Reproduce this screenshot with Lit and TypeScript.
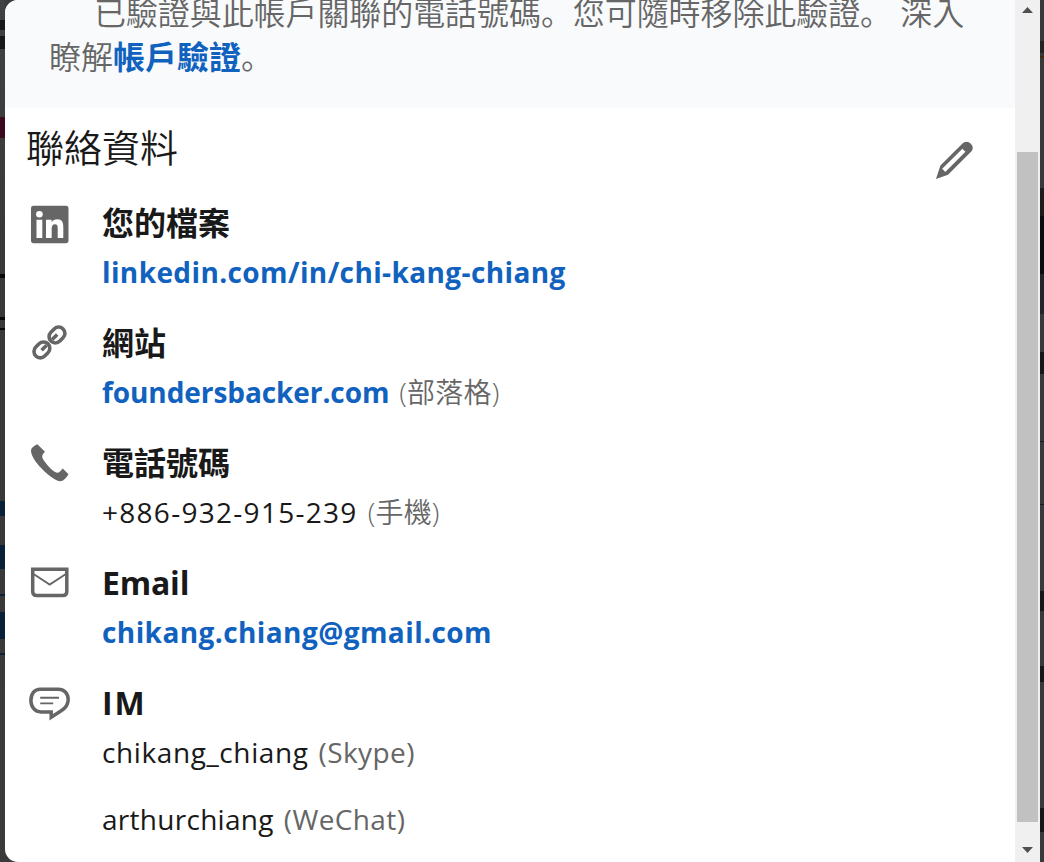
import { LitElement, html, svg, css } from 'lit';
import { customElement, property } from 'lit/decorators.js';
import { classMap } from 'lit/directives/class-map.js';

interface ContactValue {
  text: string;
  link?: boolean;
  note?: string;
  latinNote?: boolean;
  spacing: number;
  noteSpacing?: number;
}

interface ContactEntry {
  icon: string;
  title: string;
  titleSpacing?: number;
  values: ContactValue[];
}

const entries: ContactEntry[] = [
  {
    icon: 'linkedin',
    title: '您的檔案',
    values: [{ text: 'linkedin.com/in/chi-kang-chiang', link: true, spacing: 0.39 }],
  },
  {
    icon: 'link',
    title: '網站',
    values: [{ text: 'foundersbacker.com', link: true, note: '(部落格)', spacing: -0.08, noteSpacing: 0.2 }],
  },
  {
    icon: 'phone',
    title: '電話號碼',
    values: [{ text: '+886-932-915-239', note: '(手機)', spacing: 1.28, noteSpacing: 0.2 }],
  },
  {
    icon: 'email',
    title: 'Email',
    titleSpacing: -0.2,
    values: [{ text: 'chikang.chiang@gmail.com', link: true, spacing: 0.42 }],
  },
  {
    icon: 'im',
    title: 'IM',
    titleSpacing: 2,
    values: [
      { text: 'chikang_chiang', note: '(Skype)', latinNote: true, spacing: 0.6, noteSpacing: 0.4 },
      { text: 'arthurchiang', note: '(WeChat)', latinNote: true, spacing: 0.28, noteSpacing: 0.4 },
    ],
  },
];

const icons: Record<string, unknown> = {
  linkedin: svg`
    <rect x="5" y="5.8" width="37.5" height="37.4" rx="2.6" fill="currentColor"/>
    <circle cx="13.4" cy="14.2" r="3.3" fill="#fff"/>
    <path d="M10.5 19.8H16.3V38H10.5ZM20 19.8H25.6V22.3C26.7 20.5 28.8 19.3 31.4 19.3C36 19.3 37.3 22.3 37.3 27V38H31.7V28.2C31.7 25.8 31.2 24.2 29 24.2C26.7 24.2 25.7 25.9 25.7 28.2V38H20Z" fill="#fff"/>`,
  link: svg`
    <g fill="none" stroke="currentColor" stroke-width="3.6">
      <rect x="-8.6" y="-6.3" width="17.2" height="12.6" rx="6.3" transform="translate(15.9 29.9) rotate(-45)"/>
      <rect x="-8.6" y="-6.3" width="17.2" height="12.6" rx="6.3" transform="translate(31 15) rotate(-45)"/>
      <path d="M15.6 30.2L20.6 25.2M26.2 19.6L31.2 14.6"/>
    </g>`,
  phone: svg`
    <path d="M11.4 4.2L19 11.7C17.6 13.1 16.2 14.6 16.2 16.4C16.2 18 17.6 19.9 19.2 22.2C22 26.3 26.7 30.6 29.2 32.1C30.7 33 32.6 32.9 34 31.5L36.8 28.6L42.5 34.2C40.5 37.6 37.3 41.2 34.1 41.2C30.9 41.2 24 36.7 18 31C11.9 25.2 5 17 5 10.6C5 7.9 8.2 5.5 11.4 4.2Z" fill="currentColor"/>`,
  email: svg`
    <path d="M6.7 9.2H40.8V31.6Q40.8 35.6 36.8 35.6H10.7Q6.7 35.6 6.7 31.6Z" fill="none" stroke="currentColor" stroke-width="3.5"/>
    <path d="M6 13.1L23.7 24.6L41.4 13.1" fill="none" stroke="currentColor" stroke-width="1.8"/>`,
  im: svg`
    <path d="M14 9.2H32.4C37.7 9.2 42.2 13.1 42.2 19.5C42.2 25.9 38.8 28.5 35.2 30.8L25.2 37.3V31.9H15C9 31.9 4.9 27 4.9 20.6C4.9 13.5 9 9.2 14 9.2Z" fill="none" stroke="currentColor" stroke-width="3.5"/>
    <path d="M14.2 17.8H33M14.2 23.4H27.2" fill="none" stroke="currentColor" stroke-width="1.9"/>`,
};

// Slivers of the dimmed page that show beside the dialog.
const leftMarks = [
  { top: 20, height: 10, color: '#17181a' },
  { top: 36, height: 13, color: '#17181a' },
  { top: 117, height: 21, color: '#3b0a1e' },
  { top: 274, height: 4, color: '#080808' },
  { top: 317, height: 3, color: '#080808' },
  { top: 328, height: 2, color: '#080808' },
  { top: 501, height: 15, color: '#0a2038' },
  { top: 545, height: 24, color: '#0a2038' },
  { top: 594, height: 2, color: '#0a2038' },
  { top: 612, height: 27, color: '#0a2038' },
  { top: 653, height: 2, color: '#0a2038' },
];

const rightMarks = [
  { top: 41, height: 12, color: '#252421' },
  { top: 56, height: 2, color: '#3d2c10' },
  { top: 188, height: 28, color: '#1e1c1d' },
  { top: 216, height: 58, color: '#090c10' },
  { top: 274, height: 40, color: '#22252b' },
  { top: 352, height: 22, color: '#151819' },
  { top: 441, height: 1, color: '#151b2c' },
  { top: 504, height: 1, color: '#151b2c' },
  { top: 591, height: 20, color: '#151819' },
  { top: 666, height: 16, color: '#151819' },
  { top: 808, height: 24, color: '#151819' },
];

@customElement('contact-entry')
class ContactRow extends LitElement {
  @property({ attribute: false }) entry!: ContactEntry;

  static styles = css`
    :host {
      display: flex;
      padding: 0 0 24px 21px;
    }
    .icon {
      flex: none;
      width: 48px;
      height: 48px;
      margin-right: 28px;
      color: #666;
    }
    .title {
      margin: 0;
      height: 48px;
      font-size: 32px;
      font-weight: 700;
      line-height: 46px;
      color: #191919;
    }
    .value {
      height: 48px;
      margin: 0 0 19px;
      font-size: 28px;
      line-height: 48px;
      white-space: nowrap;
      color: #191919;
    }
    .value:last-child {
      margin-bottom: 0;
    }
    .link {
      font-weight: 700;
      color: #1062be;
    }
    .note {
      margin-left: 10px;
      font-weight: 350;
      color: #666;
    }
    .note.latin {
      font-weight: 400;
    }
  `;

  render() {
    return html`
      <svg class="icon" viewBox="0 0 48 48">${icons[this.entry.icon]}</svg>
      <div>
        <h3 class="title" style="letter-spacing: ${this.entry.titleSpacing ?? 0}px">${this.entry.title}</h3>
        ${this.entry.values.map((v) => html`
          <div class="value"><span
            class=${classMap({ link: !!v.link })}
            style="letter-spacing: ${v.spacing}px">${v.text}</span>${v.note
              ? html`<span
                  class=${classMap({ note: true, latin: !!v.latinNote })}
                  style="letter-spacing: ${v.noteSpacing ?? 0}px">${v.note}</span>`
              : ''}</div>
        `)}
      </div>
    `;
  }
}

@customElement('app-root')
class AppRoot extends LitElement {
  static styles = css`
    :host {
      display: grid;
      grid-template-columns: 5px 1035px 4px;
      height: 862px;
      overflow: hidden;
      background: #3a3a3a;
      font-family: 'Open Sans', 'Noto Sans CJK TC', sans-serif;
    }
    .side {
      position: relative;
      background: linear-gradient(#404143, #383838 30%, #3a3a3a);
    }
    .side.right {
      background: #363a3b;
    }
    .mark {
      position: absolute;
      left: 0;
      width: 100%;
    }
    .dialog {
      display: flex;
      height: 862px;
      overflow: hidden;
      border-radius: 13px 0 0 13px;
      background: #fff;
    }
    .content {
      width: 1010px;
    }
    .banner {
      box-sizing: border-box;
      height: 108px;
      overflow: hidden;
      padding-left: 44px;
      background: #f8fafc;
      font-size: 32px;
      font-weight: 350;
      color: #666;
      white-space: nowrap;
    }
    .line {
      height: 44px;
      margin: 0;
      line-height: 44px;
    }
    .line.first {
      margin-top: -11px;
      padding-left: 45px;
      letter-spacing: -0.08px;
    }
    .stop {
      font-family: 'Noto Sans CJK JP', sans-serif;
    }
    .learn {
      font-weight: 700;
      color: #1062be;
    }
    .head {
      display: flex;
      justify-content: space-between;
      height: 92px;
    }
    .heading {
      margin: 12px 0 0 21px;
      font-size: 38px;
      font-weight: 350;
      line-height: 54px;
      color: #191919;
    }
    .edit {
      width: 48px;
      height: 48px;
      margin: 28px 37px 0 0;
      color: #666;
    }
    .scrollbar {
      display: flex;
      flex-direction: column;
      align-items: center;
      width: 25px;
      background: #f0f0f0;
    }
    .arrow {
      width: 25px;
      height: 22px;
      fill: #505050;
    }
    .thumb {
      width: 21px;
      height: 670px;
      margin: 130px 0 18px;
      background: #c1c1c1;
    }
  `;

  renderMarks(marks: { top: number; height: number; color: string }[]) {
    return marks.map((m) => html`
      <div class="mark" style="top: ${m.top}px; height: ${m.height}px; background: ${m.color}"></div>
    `);
  }

  render() {
    const stop = html`<span class="stop" lang="ja">。</span>`;
    return html`
      <div class="side">${this.renderMarks(leftMarks)}</div>
      <div class="dialog">
        <div class="content">
          <div class="banner">
            <p class="line first">已驗證與此帳戶關聯的電話號碼${stop}您可隨時移除此驗證${stop} 深入</p>
            <p class="line">瞭解<span class="learn">帳戶驗證</span>${stop}</p>
          </div>
          <div class="head">
            <h2 class="heading">聯絡資料</h2>
            <svg class="edit" viewBox="0 0 48 48">
              <path fill="currentColor" fill-rule="evenodd" d="M40.6 7.4A5.7 5.7 0 0 0 32.5 7.4L10.4 29.5L6 42.9L18 38.8L41 15.8C43.6 13.2 43.2 9.7 40.6 7.4ZM32.4 12.7L35.4 15.7L15.3 35.9L12.2 32.8Z"/>
            </svg>
          </div>
          ${entries.map((e) => html`<contact-entry .entry=${e}></contact-entry>`)}
        </div>
        <div class="scrollbar">
          <svg class="arrow" viewBox="0 0 25 22"><path d="M12.5 7L18 13H7Z"/></svg>
          <div class="thumb"></div>
          <svg class="arrow" viewBox="0 0 25 22"><path d="M12.5 13L18 7H7Z"/></svg>
        </div>
      </div>
      <div class="side right">${this.renderMarks(rightMarks)}</div>
    `;
  }
}
